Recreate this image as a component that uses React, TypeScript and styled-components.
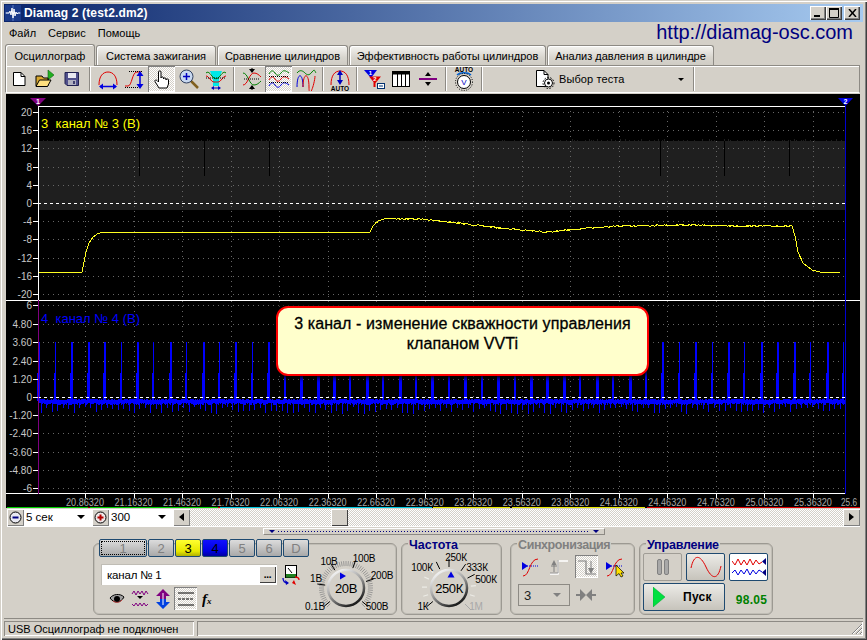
import React from 'react'
import styled, { createGlobalStyle } from 'styled-components'

const FACE = '#d4d0c8'
const NAVY = '#000080'
const UI_FONT = '"Liberation Sans", Arial, sans-serif'

const GlobalStyle = createGlobalStyle`
	html, body {
		margin: 0;
		padding: 0;
		background: ${FACE};
	}
	* {
		box-sizing: border-box;
	}
`

const dither = `
	background-color: ${FACE};
	background-image: conic-gradient(#fff 25%, ${FACE} 0 50%, #fff 0 75%, ${FACE} 0);
	background-size: 2px 2px;
`

const Window = styled.div`
	width: 867px;
	height: 640px;
	padding: 4px;
	display: flex;
	flex-direction: column;
	overflow: hidden;
	background: ${FACE};
	font: 11px ${UI_FONT};
	color: #000;
	box-shadow: inset 1px 1px 0 ${FACE}, inset 2px 2px 0 #fff, inset -1px -1px 0 #404040, inset -2px -2px 0 #808080;
`

const TitleBar = styled.div`
	height: 18px;
	flex: none;
	display: flex;
	align-items: center;
	padding: 0 3px 0 1px;
	background: linear-gradient(90deg, #0a246a, #a6caf0);
`

const TitleText = styled.div`
	flex: 1;
	margin-left: 3px;
	color: #fff;
	font-size: 12px;
	font-weight: 700;
	letter-spacing: 0.15px;
`

const CaptionButton = styled.div<{ $gap?: number }>`
	width: 16px;
	height: 14px;
	margin-left: ${p => p.$gap ?? 0}px;
	background: ${FACE};
	box-shadow: inset 1px 1px 0 #fff, inset -1px -1px 0 #404040, inset -2px -2px 0 #808080;
	display: flex;
	align-items: center;
	justify-content: center;
`

const MenuRow = styled.div`
	height: 21px;
	flex: none;
	display: flex;
	align-items: center;
	padding: 0 10px 0 5px;
`

const MenuItem = styled.span`
	margin-right: 12px;
	font-size: 11px;
`

const Url = styled.span`
	margin-left: auto;
	color: ${NAVY};
	font-size: 20px;
	line-height: 21px;
`

const TabRow = styled.div`
	height: 22px;
	flex: none;
	display: flex;
	align-items: flex-end;
	padding-left: 1px;
`

const Tab = styled.div<{ $w: number; $active?: boolean }>`
	width: ${p => p.$w}px;
	height: ${p => (p.$active ? 22 : 20)}px;
	margin-right: 1px;
	display: flex;
	align-items: center;
	justify-content: center;
	font-size: 11px;
	border: 1px solid #8d8a84;
	border-bottom: none;
	border-radius: 3px 3px 0 0;
	background: ${p => (p.$active ? FACE : 'linear-gradient(#f4f3f0, #d8d5ce 60%, #cfccc4)')};
	box-shadow: inset 1px 1px 0 #fff;
	position: relative;
	z-index: ${p => (p.$active ? 1 : 0)};
	margin-bottom: ${p => (p.$active ? -1 : 0)}px;
`

const Toolbar = styled.div`
	height: 28px;
	flex: none;
	margin: 0 3px 1px 1px;
	display: flex;
	align-items: center;
	border: 1px solid #8d8a84;
	border-bottom-color: #fff;
	box-shadow: inset 1px 1px 0 #fff;
`

const ToolButton = styled.div<{ $pressed?: boolean; $w?: number }>`
	width: ${p => p.$w ?? 27}px;
	height: 26px;
	flex: none;
	display: flex;
	align-items: center;
	justify-content: center;
	${p => (p.$pressed ? dither : '')}
	box-shadow: ${p => (p.$pressed ? 'inset 1px 1px 0 #808080, inset -1px -1px 0 #fff' : 'none')};
`

const ToolSep = styled.div<{ $w?: number }>`
	width: ${p => p.$w ?? 9}px;
	flex: none;
	height: 24px;
	display: flex;
	justify-content: center;
	&::after {
		content: '';
		width: 2px;
		height: 100%;
		background: linear-gradient(90deg, #8d8a84 50%, #fff 50%);
	}
`

const TestPicker = styled.div`
	width: 207px;
	flex: none;
	height: 26px;
	display: flex;
	align-items: center;
	padding-left: 49px;
	font-size: 11px;
	letter-spacing: 0.1px;
`

const PickerLabel = styled.span`
	margin-left: 4px;
`

const PickerArrow = styled.span`
	margin-left: auto;
	margin-right: 9px;
	width: 0;
	height: 0;
	border: 3px solid transparent;
	border-top: 3px solid #000;
	border-bottom: none;
`

const Scope = styled.div`
	position: relative;
	height: 414px;
	width: 854px;
	flex: none;
	margin-left: 2px;
	background: #000;
`

const ScopeSvg = styled.svg`
	display: block;
	flex: none;
	font-family: ${UI_FONT};
`

const Callout = styled.div`
	position: absolute;
	left: 270px;
	top: 212px;
	width: 373px;
	height: 70px;
	padding-top: 6px;
	border: 2px solid #f00;
	border-radius: 12px;
	background: #ffffcc;
	box-shadow: 0 0 5px 2px #000;
	text-align: center;
	font-size: 16px;
	line-height: 20px;
	letter-spacing: 0.1px;
	-webkit-text-stroke: 0.3px #000;
`

const ScaleRow = styled.div`
	height: 19px;
	flex: none;
	display: flex;
	align-items: center;
	margin: 0 3px;
	border-bottom: 1px solid #fff;
`

const RoundButton = styled.div`
	width: 17px;
	height: 17px;
	flex: none;
	display: flex;
	align-items: center;
	justify-content: center;
	background: ${FACE};
	box-shadow: inset 1px 1px 0 #fff, inset -1px -1px 0 #808080;
`

const ScaleSelect = styled.div<{ $w: number }>`
	width: ${p => p.$w}px;
	height: 17px;
	flex: none;
	display: flex;
	align-items: center;
	justify-content: space-between;
	padding: 0 7px 0 2px;
	background: #fff;
	font-size: 11.5px;
`

const SelectArrow = styled.span`
	width: 0;
	height: 0;
	border: 4px solid transparent;
	border-top: 4px solid #000;
	border-bottom: none;
`

const ScrollTrack = styled.div`
	flex: 1;
	height: 17px;
	display: flex;
	${dither}
`

const ScrollThumb = styled(RoundButton)`
	margin-left: 141px;
	box-shadow: inset 1px 1px 0 #fff, inset -1px -1px 0 #404040;
`

const ScrollArrow = styled.span<{ $right?: boolean }>`
	width: 0;
	height: 0;
	border: 4px solid transparent;
	border-left: ${p => (p.$right ? '5px solid #000' : 'none')};
	border-right: ${p => (p.$right ? 'none' : '5px solid #000')};
`

const Deck = styled.div`
	flex: 1;
	display: flex;
	flex-direction: column;
`

const Splitter = styled.div`
	align-self: center;
	width: 342px;
	height: 7px;
	margin-top: 1px;
	padding: 0 5px;
	display: flex;
	align-items: center;
	justify-content: space-between;
	border: 1px solid #8d8a84;
	border-top-color: #fff;
	border-left-color: #fff;
`

const SplitterDots = styled.div`
	flex: 1;
	margin: 0 3px;
	height: 1px;
	background: repeating-linear-gradient(90deg, ${NAVY} 0 1px, transparent 1px 3px);
`

const SplitterArrow = styled.span`
	width: 0;
	height: 0;
	border: 3px solid transparent;
	border-top: 3px solid ${NAVY};
	border-bottom: none;
`

const GroupRow = styled.div`
	display: flex;
	margin-top: 8px;
	padding-left: 89px;
`

const Group = styled.div<{ $w: number; $ml?: number }>`
	width: ${p => p.$w}px;
	height: 72px;
	margin-left: ${p => p.$ml ?? 0}px;
	border: 1px solid #9c9992;
	border-radius: 6px;
	box-shadow: inset 0 0 0 1px #c0bdb5;
`

const GroupTitle = styled.div<{ $muted?: boolean; $track?: number }>`
	height: 12px;
	margin: -6px 0 0 6px;
	padding: 0 1px;
	width: fit-content;
	background: ${FACE};
	color: ${p => (p.$muted ? '#808080' : NAVY)};
	font-size: 12.5px;
	font-weight: 700;
	line-height: 14px;
	letter-spacing: ${p => p.$track ?? 0}px;
`

const ChannelLayout = styled.div`
	display: flex;
`

const ChannelColumn = styled.div`
	width: 211px;
	flex: none;
	padding-left: 7px;
`

const ChannelKeys = styled.div`
	display: flex;
	gap: 1px;
	width: 212px;
	margin: -5px 0 0 -2px;
`

const ChannelKey = styled.div<{ $w?: number; $bg?: string; $ink?: string; $focus?: boolean }>`
	width: ${p => p.$w ?? 26}px;
	height: 18px;
	flex: none;
	display: flex;
	align-items: center;
	justify-content: center;
	border: 1px solid #1f4a70;
	border-radius: 2px;
	background: ${p => p.$bg ?? 'linear-gradient(#dcdcdc, #a9a9a9)'};
	color: ${p => p.$ink ?? '#808080'};
	font-size: 13px;
	outline: ${p => (p.$focus ? '1px dotted #000' : 'none')};
	outline-offset: -3px;
`

const NameRow = styled.div`
	display: flex;
	align-items: center;
	margin-top: 7px;
	gap: 5px;
`

const NameField = styled.div`
	width: 176px;
	height: 21px;
	display: flex;
	align-items: center;
	justify-content: space-between;
	padding: 0 1px 0 6px;
	background: #fff;
	font-size: 11.5px;
	letter-spacing: -0.2px;
	box-shadow: inset 1px 1px 0 #c0bdb5;
`

const MoreButton = styled.div`
	width: 17px;
	height: 17px;
	display: flex;
	align-items: center;
	justify-content: center;
	background: ${FACE};
	box-shadow: inset 1px 1px 0 #fff, inset -1px -1px 0 #404040;
	font-size: 10px;
	font-weight: 700;
	line-height: 8px;
`

const ChannelTools = styled.div`
	display: flex;
	margin-top: 2px;
	padding-left: 4px;
`

const SmallTool = styled(ToolButton)`
	width: 23px;
	height: 23px;
`

const DialSlot = styled.div`
	margin-top: 5px;
`

const SyncTools = styled.div`
	display: flex;
	gap: 5px;
	margin-top: 5px;
	padding-left: 8px;
`

const SyncLower = styled.div`
	display: flex;
	align-items: center;
	gap: 6px;
	margin-top: 6px;
	padding-left: 7px;
`

const SyncCombo = styled.div`
	width: 52px;
	height: 22px;
	display: flex;
	align-items: center;
	justify-content: space-between;
	padding: 0 8px 0 5px;
	border: 1px solid #8d8a84;
	font-size: 13px;
	color: #222;
`

const MutedArrow = styled(SelectArrow)`
	border-top-color: #808080;
`

const ControlGrid = styled.div`
	display: grid;
	grid-template-columns: repeat(3, 39px);
	grid-auto-rows: 28px;
	gap: 2px 4px;
	margin: 3px 0 0 3px;
`

const ModeButton = styled.div<{ $flat?: boolean; $bg?: string }>`
	display: flex;
	align-items: center;
	justify-content: center;
	border: 1px solid ${p => (p.$flat ? '#a09d96' : '#1f4a70')};
	border-radius: 2px;
	background: ${p => p.$bg ?? (p.$flat ? FACE : 'linear-gradient(#ecebe7, #c6c3bb)')};
`

const StartButton = styled(ModeButton)`
	grid-column: span 2;
	justify-content: flex-start;
	padding-left: 9px;
	font-size: 12px;
	font-weight: 700;
`

const StartLabel = styled.span`
	margin-left: 18px;
	letter-spacing: 0.3px;
`

const Rate = styled.div`
	display: flex;
	align-items: center;
	justify-content: center;
	padding: 6px 0 0 6px;
	color: #008000;
	font-size: 12px;
	font-weight: 700;
	letter-spacing: 0.3px;
`

const StatusBar = styled.div`
	height: 18px;
	flex: none;
	display: flex;
	gap: 3px;
	border-top: 1px solid #8d8a84;
	padding-top: 2px;
`

const StatusCell = styled.div<{ $w?: number }>`
	${p => (p.$w ? `width: ${p.$w}px; flex: none;` : 'flex: 1;')}
	display: flex;
	align-items: center;
	justify-content: space-between;
	padding-left: 4px;
	font-size: 11px;
	box-shadow: inset 1px 1px 0 #8d8a84, inset -1px -1px 0 #fff;
`

// seeded noise so the traces come out the same on every render
let seed = 7
const rnd = () => {
	seed = (seed * 16807) % 2147483647
	return seed / 2147483647
}

const yellowAnchors: [number, number][] = [
	[38, 272.5], [82, 272.5], [84, 262], [86, 252], [89, 243], [93, 237], [98, 233.5], [104, 232],
	[370, 232], [373, 226], [378, 221], [385, 218.5], [420, 219], [450, 222], [500, 228], [548, 232],
	[590, 228], [620, 226], [680, 225], [740, 226], [792, 226], [795, 236], [798, 252], [803, 263],
	[812, 270], [822, 272.5], [840, 272.5],
]

const yellowPath = () => {
	let d = 'M38 272.5'
	let a = 0
	for (let x = 39; x <= 840; x++) {
		while (yellowAnchors[a + 1][0] < x) a++
		const [x0, y0] = yellowAnchors[a]
		const [x1, y1] = yellowAnchors[a + 1]
		const jitter = x > 375 && x < 792 ? (rnd() - 0.5) * 1.4 : 0
		d += `L${x} ${(y0 + ((y1 - y0) * (x - x0)) / (x1 - x0) + jitter).toFixed(1)}`
	}
	return d
}

const bluePath = () => {
	let d = ''
	for (let x = 39; x < 845; x++) {
		const t = 398.5 + rnd() * 1.5
		d += `M${x}.5 ${t.toFixed(1)}V${(t + 4 + rnd() * 1.5).toFixed(1)}`
	}
	for (let x = 41; x < 845; x += 5.47) {
		d += `M${Math.round(x)}.5 402V${(407 + rnd() * 7).toFixed(0)}`
	}
	return d
}

const blueSpikes = () => {
	let d = ''
	let i = 0
	for (let x = 38.4; x < 843; x += 16.42) {
		const px = Math.round(x)
		d += `M${px}.5 401V341.5`
		if (i % 2 === 0 || i % 7 === 3) d += `M${px + 1}.5 401V341.5`
		d += `M${px - 1}.5 401V373`
		i++
	}
	return d
}

const bandEdge = () => {
	let d = ''
	for (let x = 38; x < 845; x += 2 + Math.floor(rnd() * 5)) {
		d += `M${x}.5 141V${(139 + rnd() * 2).toFixed(0)}`
	}
	return d
}

const YELLOW_D = yellowPath()
const BLUE_D = bluePath()
const SPIKES_D = blueSpikes()
const BAND_D = bandEdge()

const tickX = Array.from({ length: 16 }, (_, i) => 85 + i * 48.53)
const upperScale: [string, number][] = [['20', 112], ['16', 130], ['12', 148], ['8', 167], ['4', 185], ['0', 203], ['-4', 221], ['-8', 239], ['-12', 258], ['-16', 276], ['-20', 294]]
const lowerScale: [string, number][] = [['6', 305], ['4.80', 324], ['3.60', 342], ['2.40', 361], ['1.20', 379], ['0', 397], ['-1.20', 415], ['-2.40', 433], ['-3.60', 452], ['-4.80', 470], ['-6', 488]]
const statusStrip: [number, number, string][] = [[7, 81, '#00d000'], [88, 2, '#a00000'], [90, 128, '#00d000'], [218, 2, '#e00000'], [220, 212, '#00c8e0'], [433, 77, '#e8e800'], [510, 2, '#000'], [512, 60, '#e8e800'], [572, 73, '#e8e800'], [647, 213, '#e00000']]

const ScopeChart = () => (
	<ScopeSvg width={854} height={414} viewBox="6 94 854 414">
		<rect x={38} y={141} width={807} height={69} fill="#1f1f1f" />
		<path d={BAND_D} stroke="#1f1f1f" shapeRendering="crispEdges" />
		<g stroke="#000" shapeRendering="crispEdges">
			{[139, 204, 269, 660, 724, 789].map(x => <path key={x} d={`M${x}.5 141V176`} />)}
		</g>
		<g stroke="#666" strokeDasharray="1 4" shapeRendering="crispEdges">
			{tickX.map(x => <path key={x} d={`M${Math.round(x)}.5 106V493`} />)}
			{[...upperScale, ...lowerScale].map(([label, y], i) => <path key={i} d={`M38 ${y}.5H845`} opacity={label === '0' ? 0 : 1} />)}
		</g>
		<path d={YELLOW_D} fill="none" stroke="#ffff20" shapeRendering="crispEdges" />
		<path d={BLUE_D} fill="none" stroke="#0000ff" shapeRendering="crispEdges" />
		<path d={SPIKES_D} fill="none" stroke="#0000ff" shapeRendering="crispEdges" />
		<g stroke="#fff" shapeRendering="crispEdges">
			<path d="M38 203.5H845" strokeDasharray="3 3" />
			<path d="M38 397.5H845" strokeDasharray="3 3" />
			<path d="M38 106.5H845M6 300.5H860M6 493.5H845M38.5 106V300" />
			{[...upperScale, ...lowerScale].map(([, y], i) => <path key={i} d={`M33 ${y}.5H38`} />)}
			{tickX.map(x => <path key={x} d={`M${Math.round(x)}.5 494V498`} />)}
		</g>
		<path d="M38.5 300V494" stroke="#800080" shapeRendering="crispEdges" />
		<path d="M845.5 106V494" stroke="#0000d0" shapeRendering="crispEdges" />
		<g fill="#c8c8c8" fontSize={10} textAnchor="end">
			{[...upperScale, ...lowerScale].map(([label, y], i) => <text key={i} x={32} y={y + 3.5}>{label}</text>)}
		</g>
		<g fill="#a8a8a8" fontSize={10.5} textAnchor="middle">
			{tickX.map((x, i) => (
				<text key={x} x={x} y={506} textLength={38} lengthAdjust="spacingAndGlyphs">{(20.8632 + i * 0.3).toFixed(5)}</text>
			))}
			<text x={841} y={506} textAnchor="start" textLength={16} lengthAdjust="spacingAndGlyphs">25.6</text>
		</g>
		<text x={41} y={128} fill="#ffff00" fontSize={13}>3&nbsp;&nbsp;канал № 3 (В)</text>
		<text x={41} y={323} fill="#0000ff" fontSize={13}>4&nbsp;&nbsp;канал № 4 (В)</text>
		<path d="M30 98H46L38 106Z" fill="#800080" />
		<text x={38} y={104} fill="#fff" fontSize={7} fontWeight={700} textAnchor="middle">1</text>
		<path d="M838 98H853L845.5 106Z" fill="#0000e0" />
		<text x={845.5} y={104} fill="#fff" fontSize={7} fontWeight={700} textAnchor="middle">2</text>
		<g>
			{statusStrip.map(([x, w, c]) => <rect key={x} x={x} y={507} width={w} height={1} fill={c} />)}
		</g>
	</ScopeSvg>
)

const Icon = ({ children, w = 24, h = 24, vb }: { children: React.ReactNode; w?: number; h?: number; vb?: string }) => (
	<svg width={w} height={h} viewBox={vb ?? `0 0 ${w} ${h}`} fill="none">{children}</svg>
)

const AppIcon = () => (
	<Icon w={16} h={16}>
		<rect width={16} height={16} fill="#1a3a8a" />
		<path d="M0 8H16M8 0V16" stroke="#5a78c0" />
		<path d="M1 8H4L5 6L6 10L7 3L8 13L9 4L10 11L11 7L12 9L13 8H15" stroke="#fff" />
	</Icon>
)

const NewDocIcon = () => (
	<Icon>
		<path d="M6.5 5.5H14L18 9.5V18.5H6.5Z" fill="#fff" stroke="#000" />
		<path d="M14 5.5V9.5H18" stroke="#000" />
	</Icon>
)

const OpenIcon = () => (
	<Icon>
		<path d="M15 3L21 8L15 13Z" fill="#20b020" stroke="#106010" strokeWidth={0.6} />
		<path d="M3 19V9H9L10.5 11H15V19Z" fill="#d8a830" stroke="#000" />
		<path d="M3 19.5L6.5 13H18L14.5 19.5Z" fill="#ffe080" stroke="#000" />
	</Icon>
)

const SaveIcon = () => (
	<Icon>
		<path d="M5 5.5H18.5V18.5H7L5 16.5Z" fill="#50508c" stroke="#202050" />
		<rect x={8} y={6} width={8} height={5} fill="#e8e8f0" />
		<rect x={8} y={13} width={8} height={5} fill="#b0b0c0" />
		<rect x={13} y={14} width={2} height={3} fill="#404070" />
	</Icon>
)

const ArcWidthIcon = () => (
	<Icon>
		<path d="M3 18C3 9 7 5 12 5S21 9 21 18" stroke="#e00000" />
		<path d="M4 19.5H20" stroke="#0000e0" strokeWidth={1.5} />
		<path d="M3 19.5L7 16.5V22.5ZM21 19.5L17 16.5V22.5Z" fill="#0000e0" />
	</Icon>
)

const ArcHeightIcon = () => (
	<Icon>
		<path d="M2 19H5C9 19 9 5 14 5H18" stroke="#e00000" />
		<path d="M6 4.5H20M2 20.5H16" stroke="#000" strokeDasharray="1 1" />
		<path d="M17 7V19" stroke="#0000e0" strokeWidth={1.5} />
		<path d="M17 4L13.5 9H20.5ZM17 22L13.5 17H20.5Z" fill="#0000e0" />
	</Icon>
)

const HandIcon = () => (
	<Icon>
		<path d="M9 21L5 14.5C4.5 13 6 12.5 7 13.5L8.5 15V5C8.5 3.5 11 3.5 11 5V11C11 9.5 13.5 9.5 13.5 11V12C13.5 10.5 16 10.5 16 12V13C16 11.5 18.5 11.5 18.5 13V17L17 21Z" fill="#fff" stroke="#000" strokeLinejoin="round" />
	</Icon>
)

const ZoomIcon = () => (
	<Icon>
		<path d="M14 14L21 21" stroke="#806020" strokeWidth={2.5} />
		<circle cx={9.5} cy={9.5} r={6.5} fill="#c8d8f0" stroke="#304060" />
		<path d="M6 9.5H13M9.5 6V13" stroke="#0000c0" strokeWidth={1.5} />
	</Icon>
)

const CompareIcon = () => (
	<Icon>
		<path d="M6 4H18L15 12V19H9V12Z" fill="#00e8e8" />
		<path d="M2 6C5 3 7 9 10 11C12 12 12 12 14 11C17 9 19 3 22 6" stroke="#008000" />
		<path d="M2 9C5 9 7 15 10 15C12 15 13 15 14 15C17 15 19 9 22 9" stroke="#e00000" />
		<path d="M2 11H22" stroke="#000" strokeDasharray="1 1" />
		<path d="M8 21H16" stroke="#0000c0" />
		<path d="M7 21L10 19V23ZM17 21L14 19V23Z" fill="#0000c0" />
	</Icon>
)

const CrossIcon = () => (
	<Icon>
		<path d="M3 6C8 6 9 18 14 18C17 18 19 16 21 14" stroke="#008000" />
		<path d="M3 18C8 18 9 6 14 6C17 6 19 8 21 10" stroke="#e00000" />
		<path d="M4 12H20" stroke="#000" strokeDasharray="1 1" />
		<path d="M12 1V5M12 19V23" stroke="#000" />
		<path d="M9 2H15L12 6ZM9 22H15L12 18Z" fill="#000" />
	</Icon>
)

const StackIcon = () => (
	<Icon>
		<path d="M2 7C4 3 6 3 8 6S12 9 14 6S18 3 22 6" stroke="#008000" />
		<path d="M2 13C4 9 6 9 8 12S12 15 14 12S18 9 22 12" stroke="#e00000" />
		<path d="M2 19C4 15 6 15 8 18S12 21 14 18S18 15 22 18" stroke="#0000e0" />
		<path d="M2 9.5H22M2 15.5H22" stroke="#000" strokeDasharray="1 1" />
	</Icon>
)

const OverlayIcon = () => (
	<Icon>
		<path d="M3 6C6 2 9 4 11 6S15 9 18 5S21 5 22 6" stroke="#008000" />
		<path d="M3 20C3 5 9 5 9 20" stroke="#0000e0" />
		<path d="M9 20C9 5 15 5 15 20S21 15 21 9" stroke="#e00000" />
	</Icon>
)

const AutoArcIcon = () => (
	<Icon>
		<path d="M3 18C3 8 7 4 12 4S21 8 21 18" stroke="#e00000" />
		<path d="M12 5V16" stroke="#0000c0" strokeWidth={1.5} />
		<path d="M12 3L9 8H15ZM12 18L9 13H15Z" fill="#0000c0" />
		<text x={12} y={24} fontSize={6.5} fontWeight={700} fill="#000" textAnchor="middle" fontFamily={UI_FONT}>AUTO</text>
	</Icon>
)

const FilterIcon = () => (
	<Icon>
		<path d="M2 3H15L9 11Z" fill="#0000e0" />
		<path d="M7 9.5H19L13.5 16V20H11.5V15Z" fill="#e00000" />
		<text x={8.5} y={8} fontSize={6} fontWeight={700} fill="#fff" textAnchor="middle" fontFamily={UI_FONT}>1</text>
		<text x={13} y={14} fontSize={6} fontWeight={700} fill="#fff" textAnchor="middle" fontFamily={UI_FONT}>2</text>
		<rect x={15.5} y={16.5} width={7} height={5} fill="#fff" stroke="#003070" />
		<path d="M17 19H21" stroke="#003070" />
	</Icon>
)

const TableIcon = () => (
	<Icon>
		<rect x={3.5} y={4.5} width={17} height={15} fill="#fff" stroke="#000" />
		<rect x={3.5} y={4.5} width={17} height={3} fill="#000" />
		<path d="M8.5 5V19M12.5 5V19M16.5 5V19" stroke="#000" />
	</Icon>
)

const LevelIcon = () => (
	<Icon>
		<path d="M3 12H21" stroke="#800080" strokeWidth={2} />
		<path d="M12 5L9 9H15ZM12 19L9 15H15Z" fill="#000" />
	</Icon>
)

const AutoVoltIcon = () => (
	<Icon vb="0 0 24 26" h={26}>
		<text x={12} y={6} fontSize={6.5} fontWeight={700} fill="#000" textAnchor="middle" fontFamily={UI_FONT}>AUTO</text>
		<path d="M5 9C8 6 16 6 19 9" stroke="#0060d0" strokeWidth={1.5} />
		<circle cx={12} cy={16} r={6.5} fill="#fff" stroke="#000" />
		<circle cx={12} cy={16} r={8.5} stroke="#000" strokeDasharray="1 1.5" />
		<text x={12} y={19} fontSize={8} fill="#0000c0" textAnchor="middle" fontFamily={UI_FONT}>V</text>
	</Icon>
)

const TestIcon = () => (
	<Icon w={20} h={22}>
		<path d="M1.5 2.5H9L13 6.5V18.5H1.5Z" fill="#fff" stroke="#000" />
		<path d="M9 2.5V6.5H13" stroke="#000" />
		<circle cx={13.5} cy={15} r={4} fill="#fff" stroke="#000" />
		<circle cx={13.5} cy={15} r={5.5} stroke="#000" strokeDasharray="1.5 1.5" />
		<circle cx={13.5} cy={15} r={1.5} fill="#000" />
	</Icon>
)

const MinusGlyph = () => (
	<Icon w={13} h={13}>
		<circle cx={6.5} cy={6.5} r={5.5} fill="#e8e8f0" stroke="#000" />
		<path d="M3.5 6.5H9.5" stroke="#000080" strokeWidth={2} />
	</Icon>
)

const PlusGlyph = () => (
	<Icon w={13} h={13}>
		<circle cx={6.5} cy={6.5} r={5.5} fill="#f0e8e8" stroke="#000" />
		<path d="M3.5 6.5H9.5M6.5 3.5V9.5" stroke="#b00000" strokeWidth={2} />
	</Icon>
)

const MeterIcon = () => (
	<Icon w={18} h={20}>
		<rect x={3.5} y={0.5} width={11} height={12} fill="#fff" stroke="#000" />
		<rect x={4} y={9} width={10} height={3.5} fill="#208020" />
		<path d="M6 3L10 8" stroke="#000" />
		<path d="M1 13C1 17 3 18 6 18" stroke="#0000c0" strokeWidth={1.3} />
		<path d="M17 15C17 12 15 12 13 12" stroke="#e00000" strokeWidth={1.3} />
		<path d="M3 15L7 18L4 20Z" fill="#0000c0" />
		<path d="M12 15L14 20L10 18Z" fill="#e00000" />
	</Icon>
)

const EyeIcon = () => (
	<Icon w={18} h={14}>
		<path d="M2 6C5 2 12 1 16 5C13 11 6 12 2 6Z" fill="#a0a0a0" stroke="#000" />
		<circle cx={9} cy={7} r={3} fill="#000" />
		<path d="M5 9C8 11 11 11 14 8" stroke="#c04040" />
	</Icon>
)

const WaveMarkIcon = () => (
	<Icon w={18} h={20}>
		<path d="M1 5L3 2L5 6L7 2L9 5L11 2L13 6L15 2L17 5" stroke="#800080" />
		<path d="M1 15L3 17L5 14L7 17L9 14L11 17L13 14L15 17L17 15" stroke="#800080" />
		<path d="M6 7H12L9 10Z" fill="#000" />
	</Icon>
)

const UpDownIcon = () => (
	<Icon w={16} h={20}>
		<path d="M8 0L15 7H11V10H5V7H1Z" fill="#800080" />
		<path d="M8 20L15 13H11V10H5V13H1Z" fill="#0040e0" />
		<path d="M8 4V16" stroke="#fff" />
	</Icon>
)

const LinesIcon = () => (
	<Icon w={20} h={20}>
		<path d="M2 4H18M2 16H18" stroke="#000" />
		<path d="M2 10H18" stroke="#000" strokeDasharray="3 1" />
	</Icon>
)

const FxIcon = () => (
	<Icon w={14} h={16}>
		<text x={0} y={13} fontFamily='"Liberation Serif", serif' fontStyle="italic" fontWeight={700} fontSize={15} fill="#000">f</text>
		<text x={5} y={13} fontFamily='"Liberation Serif", serif' fontStyle="italic" fontWeight={700} fontSize={9} fill="#000">x</text>
	</Icon>
)

const RisingIcon = ({ cursor }: { cursor?: boolean }) => (
	<Icon w={22} h={22}>
		<path d="M3 20C10 20 9 3 18 3" stroke="#e00000" />
		<path d="M3 10H18" stroke="#0000e0" strokeDasharray="1 1" />
		<path d="M2 6L8 10L2 14Z" fill="#0000e0" />
		{cursor && <path d="M12 9L12 20L15 17.5L17 21L19 20L17 17H20Z" fill="#ffe000" stroke="#000" strokeWidth={0.7} />}
	</Icon>
)

const StepUpIcon = () => (
	<Icon w={22} h={22}>
		<path d="M2 18H10V5H20" stroke="#fff" strokeWidth={1.5} />
		<path d="M2 18H10V5" stroke="#808080" strokeWidth={0.8} transform="translate(0 -1)" />
		<path d="M6 6V16M3 10H9" stroke="#808080" />
		<path d="M6 4L3.5 9H8.5Z" fill="#808080" />
	</Icon>
)

const StepDownIcon = () => (
	<Icon w={22} h={22}>
		<path d="M2 5H10V18H20" stroke="#808080" strokeWidth={1.2} />
		<path d="M15 5V16" stroke="#808080" />
		<path d="M15 18L12 12H18Z" fill="#808080" />
	</Icon>
)

const ConvergeIcon = () => (
	<Icon w={20} h={14}>
		<path d="M0 7H8M12 7H20" stroke="#808080" strokeWidth={2} />
		<path d="M10 7L4 1V13ZM10 7L16 1V13Z" fill="#808080" />
	</Icon>
)

const PauseIcon = () => (
	<Icon w={14} h={18}>
		<rect x={1.5} y={1.5} width={4} height={15} rx={1.5} fill="#a8a8a8" stroke="#808080" />
		<rect x={8.5} y={1.5} width={4} height={15} rx={1.5} fill="#a8a8a8" stroke="#808080" />
	</Icon>
)

const SineIcon = () => (
	<Icon w={32} h={22}>
		<path d="M1 12C4 -2 10 -2 16 11S28 24 31 10" stroke="#e00000" />
	</Icon>
)

const DualWaveIcon = () => (
	<Icon w={34} h={22}>
		<path d="M0 5L3 9L6 3L9 9L12 4L15 9L18 3L21 9L24 4L27 8L30 6" stroke="#e00000" />
		<path d="M0 17L3 14L6 19L9 14L12 18L15 13L18 19L21 14L24 18L27 14L30 16" stroke="#0000e0" />
		<path d="M34 2V9L30 5.5ZM34 13V20L30 16.5Z" fill="#000080" />
	</Icon>
)

const PlayIcon = () => (
	<Icon w={12} h={20}>
		<path d="M0 0L12 10L0 20Z" fill="#00e040" stroke="#00a030" strokeWidth={0.5} />
	</Icon>
)

const GripIcon = () => (
	<Icon w={12} h={12}>
		<path d="M11 1L1 11M11 5L5 11M11 9L9 11" stroke="#808080" />
		<path d="M12 1L2 11M12 5L6 11M12 9L10 11" stroke="#fff" />
	</Icon>
)

type DialLabel = [string, number, number, string?]

const Dial = ({ vb, width, height, cx, cy, value, labels, majors, hatch, minors, children }: {
	vb: string
	width: number
	height: number
	cx: number
	cy: number
	value: string
	labels: DialLabel[]
	majors: number[]
	hatch?: boolean
	minors?: number[]
	children?: React.ReactNode
}) => {
	const id = `ring-${cx}`
	const ray = (deg: number, r0: number, r1: number) => {
		const a = ((deg - 90) * Math.PI) / 180
		return `M${(cx + r0 * Math.cos(a)).toFixed(1)} ${(cy + r0 * Math.sin(a)).toFixed(1)}L${(cx + r1 * Math.cos(a)).toFixed(1)} ${(cy + r1 * Math.sin(a)).toFixed(1)}`
	}
	const hatchAngles = hatch ? Array.from({ length: 55 }, (_, i) => -135 + i * 5) : []
	return (
		<ScopeSvg width={width} height={height} viewBox={vb}>
			<defs>
				<linearGradient id={id} x1="0.15" y1="0" x2="0.75" y2="1">
					<stop offset="0" stopColor="#fff" />
					<stop offset="0.45" stopColor="#a8a8a8" />
					<stop offset="1" stopColor="#101010" />
				</linearGradient>
			</defs>
			{hatchAngles.map(a => <path key={a} d={ray(a, 22, 27)} stroke="#8a8a8a" strokeWidth={0.8} />)}
			{(minors ?? []).map(a => <path key={a} d={ray(a, 22, 27)} stroke="#ecebe6" strokeWidth={1.2} />)}
			{majors.map(a => <path key={a} d={ray(a, 21, 29)} stroke="#000" />)}
			<circle cx={cx} cy={cy} r={18} fill={FACE} stroke={`url(#${id})`} strokeWidth={2.5} />
			<text x={cx} y={cy + 5} fontSize={13} letterSpacing={-0.4} textAnchor="middle" fill="#000">{value}</text>
			{labels.map(([t, x, y, c]) => (
				<text key={t} x={x} y={y + 3.5} fontSize={10} letterSpacing={-0.2} textAnchor="middle" fill={c ?? '#000'}>{t}</text>
			))}
			{children}
		</ScopeSvg>
	)
}

const App = () => {
	return (
		<Window>
			<GlobalStyle />
			<TitleBar>
				<AppIcon />
				<TitleText>Diamag 2 (test2.dm2)</TitleText>
				<CaptionButton>
					<svg width={8} height={8}><path d="M0 7H6" stroke="#000" strokeWidth={2} /></svg>
				</CaptionButton>
				<CaptionButton $gap={0}>
					<svg width={10} height={10}><path d="M.5 1.5H9.5V9.5H.5Z" fill="none" stroke="#000" /><path d="M0 1H10" stroke="#000" strokeWidth={2} /></svg>
				</CaptionButton>
				<CaptionButton $gap={2}>
					<svg width={9} height={8}><path d="M1 0L8 8M8 0L1 8" stroke="#000" strokeWidth={1.5} /></svg>
				</CaptionButton>
			</TitleBar>
			<MenuRow>
				<MenuItem>Файл</MenuItem>
				<MenuItem>Сервис</MenuItem>
				<MenuItem>Помощь</MenuItem>
				<Url>http://diamag-osc.com</Url>
			</MenuRow>
			<TabRow>
				<Tab $w={90} $active>Осциллограф</Tab>
				<Tab $w={120}>Система зажигания</Tab>
				<Tab $w={131}>Сравнение цилиндров</Tab>
				<Tab $w={197}>Эффективность работы цилиндров</Tab>
				<Tab $w={167}>Анализ давления в цилиндре</Tab>
			</TabRow>
			<Toolbar>
				<ToolButton $w={25}><NewDocIcon /></ToolButton>
				<ToolButton><OpenIcon /></ToolButton>
				<ToolButton><SaveIcon /></ToolButton>
				<ToolSep />
				<ToolButton><ArcWidthIcon /></ToolButton>
				<ToolButton><ArcHeightIcon /></ToolButton>
				<ToolButton $pressed><HandIcon /></ToolButton>
				<ToolButton><ZoomIcon /></ToolButton>
				<ToolButton><CompareIcon /></ToolButton>
				<ToolSep />
				<ToolButton><CrossIcon /></ToolButton>
				<ToolButton $pressed><StackIcon /></ToolButton>
				<ToolButton><OverlayIcon /></ToolButton>
				<ToolSep $w={7} />
				<ToolButton><AutoArcIcon /></ToolButton>
				<ToolSep $w={7} />
				<ToolButton><FilterIcon /></ToolButton>
				<ToolButton><TableIcon /></ToolButton>
				<ToolButton><LevelIcon /></ToolButton>
				<ToolSep />
				<ToolButton><AutoVoltIcon /></ToolButton>
				<ToolSep />
				<TestPicker>
					<TestIcon />
					<PickerLabel>Выбор теста</PickerLabel>
					<PickerArrow />
				</TestPicker>
				<ToolSep $w={2} />
			</Toolbar>
			<Scope>
				<ScopeChart />
				<Callout>
					3 канал - изменение скважности управления
					<br />
					клапаном VVTi
				</Callout>
			</Scope>
			<ScaleRow>
				<RoundButton><MinusGlyph /></RoundButton>
				<ScaleSelect $w={68}>5 сек<SelectArrow /></ScaleSelect>
				<RoundButton><PlusGlyph /></RoundButton>
				<ScaleSelect $w={64}>300<SelectArrow /></ScaleSelect>
				<RoundButton><ScrollArrow /></RoundButton>
				<ScrollTrack><ScrollThumb /></ScrollTrack>
				<RoundButton><ScrollArrow $right /></RoundButton>
			</ScaleRow>
			<Deck>
				<Splitter>
					<SplitterArrow />
					<SplitterDots />
					<SplitterArrow />
				</Splitter>
				<GroupRow>
					<Group $w={304}>
						<ChannelLayout>
							<ChannelColumn>
								<ChannelKeys>
									<ChannelKey $w={48} $focus>1</ChannelKey>
									<ChannelKey>2</ChannelKey>
									<ChannelKey $bg="linear-gradient(#ffff30, #e8e800 70%, #b0b000)" $ink="#000">3</ChannelKey>
									<ChannelKey $bg="linear-gradient(#1010ff, #0000e0 70%, #0000a0)" $ink="#000">4</ChannelKey>
									<ChannelKey>5</ChannelKey>
									<ChannelKey>6</ChannelKey>
									<ChannelKey>D</ChannelKey>
								</ChannelKeys>
								<NameRow>
									<NameField>
										канал № 1
										<MoreButton>...</MoreButton>
									</NameField>
									<MeterIcon />
								</NameRow>
								<ChannelTools>
									<SmallTool><EyeIcon /></SmallTool>
									<SmallTool><WaveMarkIcon /></SmallTool>
									<SmallTool><UpDownIcon /></SmallTool>
									<SmallTool $pressed><LinesIcon /></SmallTool>
									<SmallTool><FxIcon /></SmallTool>
								</ChannelTools>
							</ChannelColumn>
							<DialSlot>
								<Dial
									vb="305 549 91 65"
									width={91}
									height={65}
									cx={346}
									cy={588}
									value="20В"
									hatch
									majors={[-130, -82, -32, 19, 72, 130]}
									labels={[['10В', 329, 561], ['100В', 364, 558], ['1В', 316, 578], ['200В', 382, 575], ['0.1В', 315, 606], ['500В', 377, 606]]}
								>
									<path d="M340 572.5l6 3.5l-6 3.5Z" fill="#0000e0" />
								</Dial>
							</DialSlot>
						</ChannelLayout>
					</Group>
					<Group $w={101} $ml={4}>
						<GroupTitle>Частота</GroupTitle>
						<Dial
							vb="402 550 99 64"
							width={99}
							height={64}
							cx={449}
							cy={588}
							value="250К"
							majors={[-130, -26, 0, 35, 62]}
							minors={[-108, -88, -66, -46, 85, 108]}
							labels={[['250К', 456, 557], ['100К', 422, 567], ['333К', 477, 567], ['500К', 486, 579], ['1К', 423, 606], ['1М', 476, 606, '#a8a8a8']]}
						>
							<path d="M451 571.5l-3.5 6h7Z" fill="#0000e0" />
							<path d="M465 604L471 610" stroke="#a8a8a8" />
						</Dial>
					</Group>
					<Group $w={125} $ml={8}>
						<GroupTitle $muted $track={-0.4}>Синхронизация</GroupTitle>
						<SyncTools>
							<SmallTool><RisingIcon /></SmallTool>
							<SmallTool><StepUpIcon /></SmallTool>
							<SmallTool $pressed><StepDownIcon /></SmallTool>
							<SmallTool><RisingIcon cursor /></SmallTool>
						</SyncTools>
						<SyncLower>
							<SyncCombo>3<MutedArrow /></SyncCombo>
							<ConvergeIcon />
						</SyncLower>
					</Group>
					<Group $w={134} $ml={4}>
						<GroupTitle $track={-0.2}>Управление</GroupTitle>
						<ControlGrid>
							<ModeButton $flat><PauseIcon /></ModeButton>
							<ModeButton><SineIcon /></ModeButton>
							<ModeButton $bg="#fff"><DualWaveIcon /></ModeButton>
							<StartButton>
								<PlayIcon />
								<StartLabel>Пуск</StartLabel>
							</StartButton>
							<Rate>98.05</Rate>
						</ControlGrid>
					</Group>
				</GroupRow>
			</Deck>
			<StatusBar>
				<StatusCell $w={190}>USB Осциллограф не подключен</StatusCell>
				<StatusCell>
					<span />
					<GripIcon />
				</StatusCell>
			</StatusBar>
		</Window>
	)
}

export default App
